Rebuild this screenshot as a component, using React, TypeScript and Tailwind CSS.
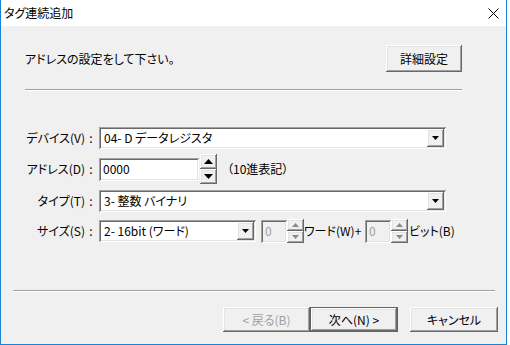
const raised =
  'bg-[#f0f0f0] shadow-[inset_-1px_-1px_0_#696969,inset_1px_1px_0_#ffffff,inset_-2px_-2px_0_#a0a0a0,inset_2px_2px_0_#e3e3e3]'
const sunken =
  'shadow-[inset_1px_1px_0_#a0a0a0,inset_-1px_-1px_0_#ffffff,inset_2px_2px_0_#696969,inset_-2px_-2px_0_#e3e3e3]'

function Tri({ up, color = '#000', big }: { up?: boolean; color?: string; big?: boolean }) {
  const w = big ? 9 : 7
  const h = big ? 5 : 4
  return (
    <svg width={w} height={h} viewBox={`0 0 ${w} ${h}`}>
      <polygon points={up ? `${w / 2},0 ${w},${h} 0,${h}` : `0,0 ${w},0 ${w / 2},${h}`} fill={color} />
    </svg>
  )
}

function Combo({ value, width }: { value: string; width: string }) {
  return (
    <div className={`${sunken} bg-white h-[22px] ${width} flex items-center p-[2px]`}>
      <span className="flex-1 pl-[3px] leading-none whitespace-nowrap">{value}</span>
      <div className={`${raised} w-[17px] h-[18px] flex items-center justify-center`}>
        <Tri />
      </div>
    </div>
  )
}

function Spinner({ small, disabled }: { small?: boolean; disabled?: boolean }) {
  const h = small ? 'h-[12px]' : 'h-[15px]'
  const c = disabled ? '#8a8a8a' : '#000'
  return (
    <div className="flex flex-col w-[17px]">
      <div className={`${raised} ${h} flex items-center justify-center`}>
        <Tri up color={c} big={!small} />
      </div>
      <div className={`${raised} ${h} flex items-center justify-center`}>
        <Tri color={c} big={!small} />
      </div>
    </div>
  )
}

function Label({ text }: { text: string }) {
  return (
    <div className="w-[74px] flex justify-end items-center whitespace-nowrap pr-[2px]">
      <span>{text}</span>
      <span className="w-[12px] text-center">:</span>
    </div>
  )
}

export default function App() {
  return (
    <div className="w-[510px] h-[345px] bg-white text-[12px] text-black [font-family:'Noto_Sans_CJK_JP',sans-serif] [font-feature-settings:'palt']">
      <div className="w-[507px] h-[345px] flex flex-col border-x border-b border-[#1883d7]">
        {/* Title bar */}
        <div className="h-[26px] bg-white flex items-center justify-between pl-[3px] pr-[7px]">
          <span>タグ連続追加</span>
          <svg width="11" height="11" viewBox="0 0 11 11">
            <path d="M0.5 0.5 L10.5 10.5 M10.5 0.5 L0.5 10.5" stroke="#000" strokeWidth="1" />
          </svg>
        </div>

        {/* Body */}
        <div className="flex-1 bg-[#f0f0f0] flex flex-col">
          <div className="ml-[24px] mt-[19px] w-[437px] flex items-center justify-between">
            <span>アドレスの設定をして下さい。</span>
            <button className={`${raised} w-[76px] h-[27px]`}>詳細設定</button>
          </div>
          <div className="ml-[24px] mt-[17px] w-[437px] h-[2px] border-t border-[#a0a0a0] border-b border-b-white" />

          {/* Form */}
          <div className="ml-[24px] mt-[36px] flex flex-col">
            <div className="flex items-center">
              <Label text="デバイス(V)" />
              <Combo value="04- D データレジスタ" width="w-[347px]" />
            </div>

            <div className="flex items-center mt-[5px] h-[30px]">
              <Label text="アドレス(D)" />
              <div className={`${sunken} bg-white w-[100px] h-[23px] flex items-center pl-[4px]`}>0000</div>
              <div className="ml-[1px]">
                <Spinner />
              </div>
              <span className="ml-[10px]">（10進表記）</span>
            </div>

            <div className="flex items-center mt-[6px]">
              <Label text="タイプ(T)" />
              <Combo value="3- 整数 バイナリ" width="w-[347px]" />
            </div>

            <div className="flex items-center mt-[7px] h-[24px]">
              <Label text="サイズ(S)" />
              <Combo value="2- 16bit (ワード)" width="w-[157px]" />
              <div className={`${sunken} ml-[5px] w-[26px] h-[23px] flex items-center pl-[4px] text-[#a0a0a0]`}>0</div>
              <Spinner small disabled />
              <span className="w-[61px] whitespace-nowrap">ワード(W)+</span>
              <div className={`${sunken} w-[26px] h-[23px] flex items-center pl-[4px] text-[#a0a0a0]`}>0</div>
              <Spinner small disabled />
              <span className="ml-[1px] whitespace-nowrap">ビット(B)</span>
            </div>
          </div>

          <div className="ml-[12px] mt-[47px] w-[482px] h-[2px] border-t border-[#a0a0a0] border-b border-b-white" />

          <div className="mt-[15px] flex justify-end pr-[8px]">
            <button className={`${raised} w-[87px] h-[25px] text-[#a0a0a0]`}>&lt; 戻る(B)</button>
            <button className="w-[88px] h-[25px] border border-[#646464] flex">
              <span className={`${raised} flex-1 flex items-center justify-center`}>次へ(N) &gt;</span>
            </button>
            <button className={`${raised} ml-[12px] w-[88px] h-[25px]`}>キャンセル</button>
          </div>
        </div>
      </div>
    </div>
  )
}
